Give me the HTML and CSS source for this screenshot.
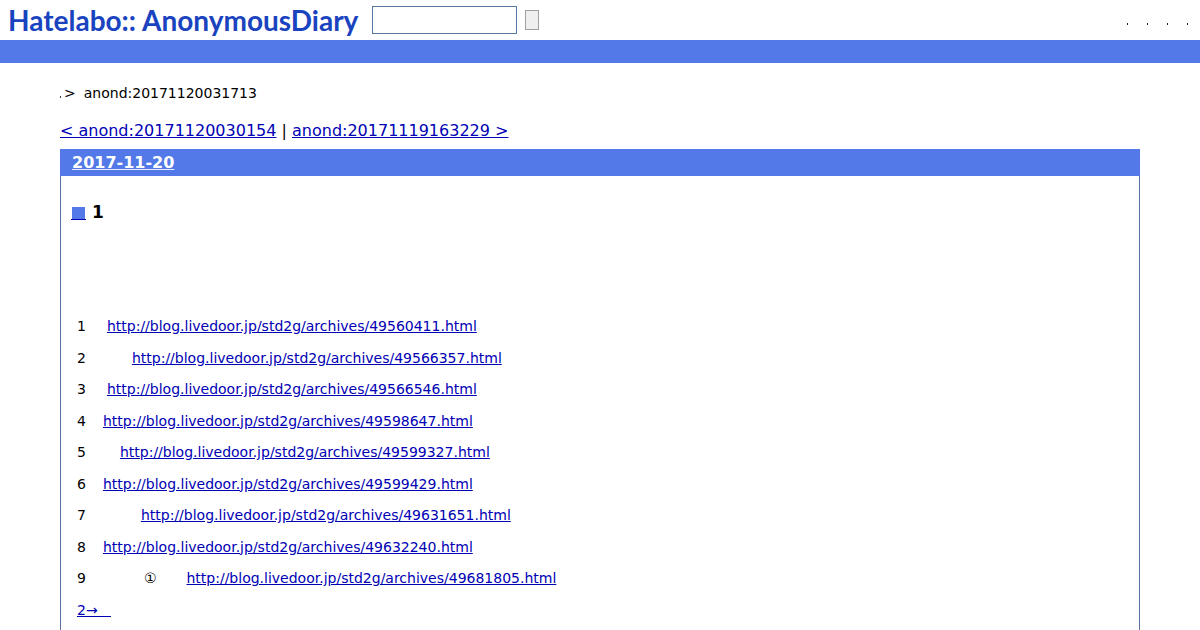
FILE: index.html
```html
<!DOCTYPE html>
<html lang="ja">
<head>
<meta charset="utf-8">
<title>Hatelabo::AnonymousDiary</title>
<link rel="stylesheet" href="styles.css">
</head>
<body>
<header class="header">
  <h1 class="logo"><span>Hatelabo::</span><span>AnonymousDiary</span></h1>
  <form class="search">
    <input class="search-box" type="text" aria-label="Search">
    <button class="search-button" type="button" aria-label="Submit search"></button>
  </form>
  <ul class="tools"><li></li><li></li><li></li><li></li></ul>
</header>
<div class="bar"></div>
<main class="content">
  <nav class="crumbs"><span class="crumb-dot"></span><span>&gt;</span><span class="crumb-current">anond:20171120031713</span></nav>
  <nav class="pager"><a href="#prev">&lt; anond:20171120030154</a> | <a href="#next">anond:20171119163229 &gt;</a></nav>
  <article class="day">
    <h2 class="day-title"><a href="#day">2017-11-20</a></h2>
    <section class="entry">
      <h3 class="entry-title"><a href="#entry" aria-label="Permalink"><span class="mark"></span></a>1</h3>
      <ul class="links">
        <li>1<a class="gap-m" href="http://blog.livedoor.jp/std2g/archives/49560411.html">http://blog.livedoor.jp/std2g/archives/49560411.html</a></li>
        <li>2<a class="gap-xl" href="http://blog.livedoor.jp/std2g/archives/49566357.html">http://blog.livedoor.jp/std2g/archives/49566357.html</a></li>
        <li>3<a class="gap-m" href="http://blog.livedoor.jp/std2g/archives/49566546.html">http://blog.livedoor.jp/std2g/archives/49566546.html</a></li>
        <li>4<a class="gap-s" href="http://blog.livedoor.jp/std2g/archives/49598647.html">http://blog.livedoor.jp/std2g/archives/49598647.html</a></li>
        <li>5<a class="gap-l" href="http://blog.livedoor.jp/std2g/archives/49599327.html">http://blog.livedoor.jp/std2g/archives/49599327.html</a></li>
        <li>6<a class="gap-s" href="http://blog.livedoor.jp/std2g/archives/49599429.html">http://blog.livedoor.jp/std2g/archives/49599429.html</a></li>
        <li>7<a class="gap-xxl" href="http://blog.livedoor.jp/std2g/archives/49631651.html">http://blog.livedoor.jp/std2g/archives/49631651.html</a></li>
        <li>8<a class="gap-s" href="http://blog.livedoor.jp/std2g/archives/49632240.html">http://blog.livedoor.jp/std2g/archives/49632240.html</a></li>
        <li>9<span class="gap-3xl">①</span><a class="gap-part" href="http://blog.livedoor.jp/std2g/archives/49681805.html">http://blog.livedoor.jp/std2g/archives/49681805.html</a></li>
        <li><a href="#part2">2→&nbsp;&nbsp;&nbsp;</a></li>
      </ul>
    </section>
  </article>
</main>
</body>
</html>
```
FILE: styles.css
```css
body {
  margin: 0;
  background: #fff;
  color: #000;
  font: 14px/20px "DejaVu Sans", sans-serif;
}
a { color: #0000b4; }
ul { list-style: none; margin: 0; padding: 0; }

.header {
  display: flex;
  align-items: center;
  height: 40px;
  padding: 0 12px 0 8px;
}
.logo {
  display: flex;
  gap: 6px;
  width: 352px;
  margin: 0 12px 0 0;
  color: #1a43c0;
  font: bold 28px/38px Lato, sans-serif;
}
.search { display: flex; align-items: center; gap: 8px; }
.search-box {
  box-sizing: border-box;
  width: 145px;
  height: 28px;
  border: 1px solid #58779f;
  background: #fff;
}
.search-button {
  box-sizing: border-box;
  width: 14px;
  height: 20px;
  padding: 0;
  border: 1px solid #a0a0a0;
  border-radius: 0;
  background: #efefef;
}
.tools { display: flex; gap: 19px; margin-left: auto; padding-top: 8px; }
.tools li { width: 1px; height: 2px; background: #222; }
.bar { height: 23px; background: #5279e7; }

.content { padding: 20px 60px 0; }
.crumbs { display: flex; align-items: center; }
.crumb-dot { width: 1px; height: 2px; margin: 8px 3px 0 0; background: #444; }
.crumb-current { margin-left: 8px; }
.pager { margin: 18px 0 8px; font-size: 16px; }

.day { border: 1px solid #58709c; border-top: 0; border-bottom: 0; }
.day-title {
  margin: 0 -1px;
  padding: 4px 12px 3px;
  background: #5279e7;
  font-size: 16px;
  line-height: 20px;
}
.day-title a { color: #fff; text-decoration-color: #e4eaff; }
.entry { padding: 26px 10px 0; }
.entry-title { display: flex; gap: 6px; margin: 0; font-size: 17px; }
.entry-title a { text-decoration: none; border-bottom: 1px solid #0000b4; height: 17px; padding: 0 1px; }
.mark { display: block; width: 13px; height: 12px; margin-top: 5px; background: #5279e7; }

.links { padding: 89px 6px 20px; line-height: 2.25; }
.gap-s { margin-left: 17px; }
.gap-m { margin-left: 21px; }
.gap-l { margin-left: 34px; }
.gap-xl { margin-left: 46px; }
.gap-xxl { margin-left: 55px; }
.gap-3xl { margin-left: 58px; }
.gap-part { margin-left: 30px; }
```
